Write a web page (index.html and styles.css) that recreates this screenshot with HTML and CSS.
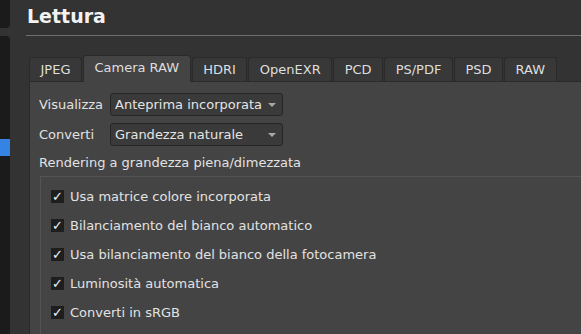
FILE: index.html
```html
<!DOCTYPE html>
<html>
<head>
<meta charset="utf-8">
<link rel="stylesheet" href="styles.css">
</head>
<body>
<div class="app">
  <aside class="sidebar">
    <div class="side-top"></div>
    <div class="side-list"><div class="side-sel"></div></div>
  </aside>
  <main class="main">
    <h1 class="title">Lettura</h1>
    <div class="tabs">
      <div class="tab">JPEG</div>
      <div class="tab active">Camera RAW</div>
      <div class="tab">HDRI</div>
      <div class="tab">OpenEXR</div>
      <div class="tab">PCD</div>
      <div class="tab">PS/PDF</div>
      <div class="tab">PSD</div>
      <div class="tab">RAW</div>
    </div>
    <section class="panel">
      <div class="form">
        <span class="label">Visualizza</span>
        <div class="combo"><span>Anteprima incorporata</span><span class="arrow"></span></div>
        <span class="label">Converti</span>
        <div class="combo"><span>Grandezza naturale</span><span class="arrow"></span></div>
      </div>
      <div class="group-title">Rendering a grandezza piena/dimezzata</div>
      <div class="frame">
        <label class="check"><span class="box">✓</span>Usa matrice colore incorporata</label>
        <label class="check"><span class="box">✓</span>Bilanciamento del bianco automatico</label>
        <label class="check"><span class="box">✓</span>Usa bilanciamento del bianco della fotocamera</label>
        <label class="check"><span class="box">✓</span>Luminosità automatica</label>
        <label class="check"><span class="box">✓</span>Converti in sRGB</label>
      </div>
    </section>
  </main>
</div>
</body>
</html>
```

FILE: styles.css
```css
html, body {
  margin: 0;
  padding: 0;
  width: 581px;
  height: 334px;
  overflow: hidden;
  background: #333333;
  font-family: "DejaVu Sans", sans-serif;
  font-size: 13px;
  color: #e2e2e2;
}

.app {
  display: flex;
  height: 334px;
  overflow: hidden;
}

.sidebar {
  width: 10px;
  flex: none;
  display: flex;
  flex-direction: column;
  gap: 8px;
}

.side-top {
  height: 28px;
  background: #1b1b1b;
  border-bottom-right-radius: 4px;
}

.side-list {
  flex: 1;
  background: #1b1b1b;
  border-top-right-radius: 4px;
  padding-top: 103px;
}

.side-sel {
  height: 17px;
  background: #3584e4;
}

.main {
  flex: 1;
  min-width: 0;
  padding-left: 16px;
  display: flex;
  flex-direction: column;
  overflow: hidden;
}

.title {
  margin: 0;
  padding: 4px 0 7px 1px;
  font-size: 19px;
  font-weight: bold;
  color: #f2f2f2;
  line-height: 24px;
  border-bottom: 1px solid #6e6e6e;
}

.tabs {
  display: flex;
  align-items: flex-end;
  gap: 1px;
  margin-top: 19px;
  margin-left: 3px;
  height: 26px;
  position: relative;
  z-index: 1;
}

.tab {
  height: 23px;
  line-height: 23px;
  padding: 0 10.5px;
  background: #383838;
  border: 1px solid #2a2a2a;
  border-bottom: none;
  border-top-left-radius: 3px;
  border-top-right-radius: 3px;
  color: #dedede;
  white-space: nowrap;
  flex: none;
}

.tab.active {
  height: 26px;
  line-height: 23px;
  background: #444444;
  margin-bottom: -1px;
  border-color: #2a2a2a;
}

.panel {
  flex: 1;
  margin-left: 3px;
  margin-right: -10px;
  background: #444444;
  border: 1px solid #2a2a2a;
  padding: 11px 0 0 9px;
}

.form {
  display: grid;
  grid-template-columns: 71px 173px;
  row-gap: 7px;
  align-items: center;
}

.combo {
  height: 21px;
  border: 1px solid #262626;
  border-radius: 3px;
  background: #3a3a3a;
  display: flex;
  align-items: center;
  justify-content: space-between;
  padding: 0 4px;
  color: #e4e4e4;
}

.arrow {
  width: 0;
  height: 0;
  border-left: 4px solid transparent;
  border-right: 4px solid transparent;
  border-top: 4px solid #a8a8a8;
  margin-right: 2px;
}

.group-title {
  margin-top: 8px;
  height: 18px;
  line-height: 18px;
}

.frame {
  margin-top: 4px;
  margin-left: 1px;
  border-top: 1px solid #545454;
  border-left: 1px solid #545454;
  padding: 13px 0 0 10px;
  display: flex;
  flex-direction: column;
  gap: 16px;
  height: 200px;
}

.check {
  display: flex;
  align-items: center;
  height: 13px;
  gap: 6px;
}

.box {
  width: 13px;
  height: 13px;
  background: #1e1e1e;
  color: #f4f4f4;
  font-size: 13px;
  line-height: 13px;
  text-align: center;
}
```
